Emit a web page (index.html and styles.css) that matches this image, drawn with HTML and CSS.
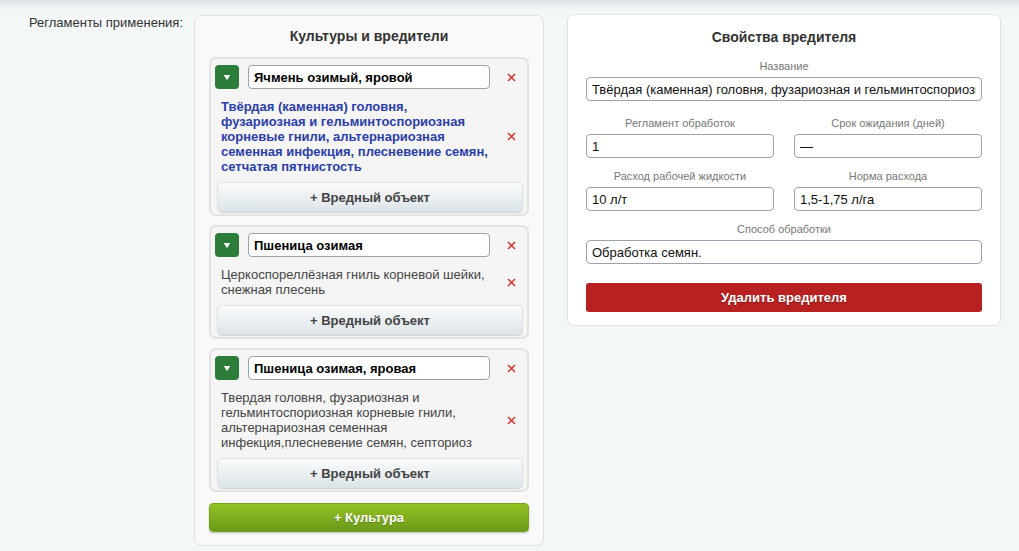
FILE: index.html
```html
<!DOCTYPE html>
<html lang="ru">
<head>
<meta charset="utf-8">
<title>Регламенты применения</title>
<link rel="stylesheet" href="styles.css">
</head>
<body>
<div class="topshade"></div>
<div class="page">
  <div class="field-label">Регламенты применения:</div>

  <section class="panel crops">
    <h2 class="panel-title">Культуры и вредители</h2>

    <div class="crop">
      <div class="crop-head">
        <button class="toggle"><svg width="8" height="7" viewBox="0 0 8 7"><path d="M0.8 1 L7.2 1 L4 6.2 Z" fill="#fff"/></svg></button>
        <input class="crop-input" type="text" value="Ячмень озимый, яровой">
        <span class="del"><svg width="9" height="9" viewBox="0 0 9 9"><path d="M1 1 L8 8 M8 1 L1 8" stroke="#d9342b" stroke-width="1.5"/></svg></span>
      </div>
      <div class="pest">
        <div class="pest-text active">Твёрдая (каменная) головня, фузариозная и гельминтоспориозная корневые гнили, альтернариозная семенная инфекция, плесневение семян, сетчатая пятнистость</div>
        <span class="del"><svg width="9" height="9" viewBox="0 0 9 9"><path d="M1 1 L8 8 M8 1 L1 8" stroke="#d9342b" stroke-width="1.5"/></svg></span>
      </div>
      <button class="add-pest">+ Вредный объект</button>
    </div>

    <div class="crop">
      <div class="crop-head">
        <button class="toggle"><svg width="8" height="7" viewBox="0 0 8 7"><path d="M0.8 1 L7.2 1 L4 6.2 Z" fill="#fff"/></svg></button>
        <input class="crop-input" type="text" value="Пшеница озимая">
        <span class="del"><svg width="9" height="9" viewBox="0 0 9 9"><path d="M1 1 L8 8 M8 1 L1 8" stroke="#d9342b" stroke-width="1.5"/></svg></span>
      </div>
      <div class="pest">
        <div class="pest-text">Церкоспореллёзная гниль корневой шейки, снежная плесень</div>
        <span class="del"><svg width="9" height="9" viewBox="0 0 9 9"><path d="M1 1 L8 8 M8 1 L1 8" stroke="#d9342b" stroke-width="1.5"/></svg></span>
      </div>
      <button class="add-pest">+ Вредный объект</button>
    </div>

    <div class="crop">
      <div class="crop-head">
        <button class="toggle"><svg width="8" height="7" viewBox="0 0 8 7"><path d="M0.8 1 L7.2 1 L4 6.2 Z" fill="#fff"/></svg></button>
        <input class="crop-input" type="text" value="Пшеница озимая, яровая">
        <span class="del"><svg width="9" height="9" viewBox="0 0 9 9"><path d="M1 1 L8 8 M8 1 L1 8" stroke="#d9342b" stroke-width="1.5"/></svg></span>
      </div>
      <div class="pest">
        <div class="pest-text">Твердая головня, фузариозная и гельминтоспориозная корневые гнили, альтернариозная семенная инфекция,плесневение семян, септориоз</div>
        <span class="del"><svg width="9" height="9" viewBox="0 0 9 9"><path d="M1 1 L8 8 M8 1 L1 8" stroke="#d9342b" stroke-width="1.5"/></svg></span>
      </div>
      <button class="add-pest">+ Вредный объект</button>
    </div>

    <button class="add-crop">+ Культура</button>
  </section>

  <section class="panel props">
    <h2 class="panel-title">Свойства вредителя</h2>
    <div class="prop">
      <label class="prop-label">Название</label>
      <input class="prop-input" type="text" value="Твёрдая (каменная) головня, фузариозная и гельминтоспориозная корневые гнили">
    </div>
    <div class="prop-row prop-row-first">
      <div class="prop">
        <label class="prop-label">Регламент обработок</label>
        <input class="prop-input" type="text" value="1">
      </div>
      <div class="prop">
        <label class="prop-label">Срок ожидания (дней)</label>
        <input class="prop-input" type="text" value="—">
      </div>
    </div>
    <div class="prop-row">
      <div class="prop">
        <label class="prop-label">Расход рабочей жидкости</label>
        <input class="prop-input" type="text" value="10 л/т">
      </div>
      <div class="prop">
        <label class="prop-label">Норма расхода</label>
        <input class="prop-input" type="text" value="1,5-1,75 л/га">
      </div>
    </div>
    <div class="prop prop-spaced">
      <label class="prop-label">Способ обработки</label>
      <input class="prop-input" type="text" value="Обработка семян.">
    </div>
    <button class="del-pest">Удалить вредителя</button>
  </section>
</div>
</body>
</html>
```

FILE: styles.css
```css
* { box-sizing: border-box; }

html, body {
  margin: 0;
  padding: 0;
}

body {
  background: #f4f7f8;
  font-family: "Liberation Sans", Arial, sans-serif;
  font-size: 13px;
  color: #333;
  height: 551px;
  overflow: hidden;
  position: relative;
}

.topshade {
  position: absolute;
  left: 0;
  right: 0;
  top: 0;
  height: 10px;
  background: linear-gradient(#dfe3e6, rgba(244, 247, 248, 0));
}

.page {
  display: flex;
  align-items: flex-start;
  padding-top: 14px;
}

.field-label {
  width: 183px;
  text-align: right;
  line-height: 16px;
  padding-top: 1px;
  color: #333;
  flex: none;
}

.panel {
  border: 1px solid #dfe2e4;
  border-radius: 7px;
  flex: none;
}

.panel-title {
  margin: 0;
  font-size: 14px;
  font-weight: bold;
  line-height: 18px;
  text-align: center;
  color: #333;
}

/* left panel */
.crops {
  width: 350px;
  margin-left: 11px;
  margin-top: 1px;
  background: #f9f9f9;
  padding: 11px 14px 13px 14px;
}

.crops .panel-title {
  margin-bottom: 12px;
}

.crop {
  background: #f5f5f5;
  border: 2px solid #e2e2e2;
  border-radius: 7px;
  padding: 6px 4px 2px 4px;
  margin-bottom: 9px;
}

.crop:last-of-type {
  margin-bottom: 11px;
}

.crop-head {
  display: flex;
  align-items: center;
  height: 24px;
  margin-bottom: 10px;
}

.toggle {
  width: 24px;
  height: 24px;
  flex: none;
  border: none;
  border-radius: 4px;
  background: #2c7d3a;
  padding: 0;
  display: flex;
  align-items: center;
  justify-content: center;
}

.crop-input {
  flex: 1;
  min-width: 0;
  height: 24px;
  margin-left: 9px;
  border: 1px solid #9aa2aa;
  border-radius: 4px;
  background: #fff;
  font-family: "Liberation Sans", Arial, sans-serif;
  font-size: 13px;
  font-weight: bold;
  color: #000;
  padding: 0 5px;
}

.del {
  width: 12px;
  flex: none;
  margin-left: 15px;
  margin-right: 6px;
  display: flex;
  justify-content: center;
  align-items: center;
}

.pest {
  display: flex;
  align-items: center;
  padding-left: 6px;
  margin-bottom: 8px;
}

.pest-text {
  flex: 1;
  line-height: 15px;
  color: #444;
}

.pest-text.active {
  color: #2c3ea8;
  font-weight: bold;
}

.add-pest {
  display: block;
  width: calc(100% - 2px);
  margin-left: 2px;
  height: 30px;
  border: 1px solid #dde2e5;
  border-radius: 5px;
  background: linear-gradient(#fbfcfc, #dce4e9);
  box-shadow: 0 1px 1px rgba(0, 0, 0, 0.15);
  font-family: "Liberation Sans", Arial, sans-serif;
  font-size: 13px;
  font-weight: bold;
  color: #444;
  padding: 0;
}

.add-crop {
  display: block;
  width: 100%;
  height: 29px;
  border: 1px solid #76a51c;
  border-radius: 4px;
  background: linear-gradient(#94c223, #6a9a19);
  box-shadow: 0 1px 2px rgba(0, 0, 0, 0.25);
  font-family: "Liberation Sans", Arial, sans-serif;
  font-size: 13px;
  font-weight: bold;
  color: #fff;
  text-shadow: 0 1px 1px rgba(0, 0, 0, 0.25);
  padding: 0;
}

/* right panel */
.props {
  width: 434px;
  margin-left: 23px;
  background: #fff;
  padding: 13px 18px 13px 18px;
}

.props .panel-title {
  margin-bottom: 14px;
}

.prop {
  display: flex;
  flex-direction: column;
}

.prop-row {
  display: flex;
  gap: 20px;
  margin-top: 12px;
}

.prop-row-first {
  margin-top: 16px;
}

.prop-spaced {
  margin-top: 12px;
}

.prop-row .prop {
  flex: 1;
  min-width: 0;
}

.prop-label {
  font-size: 11px;
  line-height: 13px;
  color: #777;
  text-align: center;
  margin-bottom: 4px;
}

.prop-input {
  width: 100%;
  height: 24px;
  border: 1px solid #9ba3ad;
  border-radius: 4px;
  background: #fff;
  font-family: "Liberation Sans", Arial, sans-serif;
  font-size: 13px;
  color: #111;
  padding: 0 5px;
}

.del-pest {
  display: block;
  width: 100%;
  height: 29px;
  margin-top: 19px;
  border: none;
  border-radius: 3px;
  background: #b82121;
  font-family: "Liberation Sans", Arial, sans-serif;
  font-size: 13px;
  font-weight: bold;
  color: #fff;
  text-shadow: 0 1px 1px rgba(0, 0, 0, 0.3);
  padding: 0;
}
```
